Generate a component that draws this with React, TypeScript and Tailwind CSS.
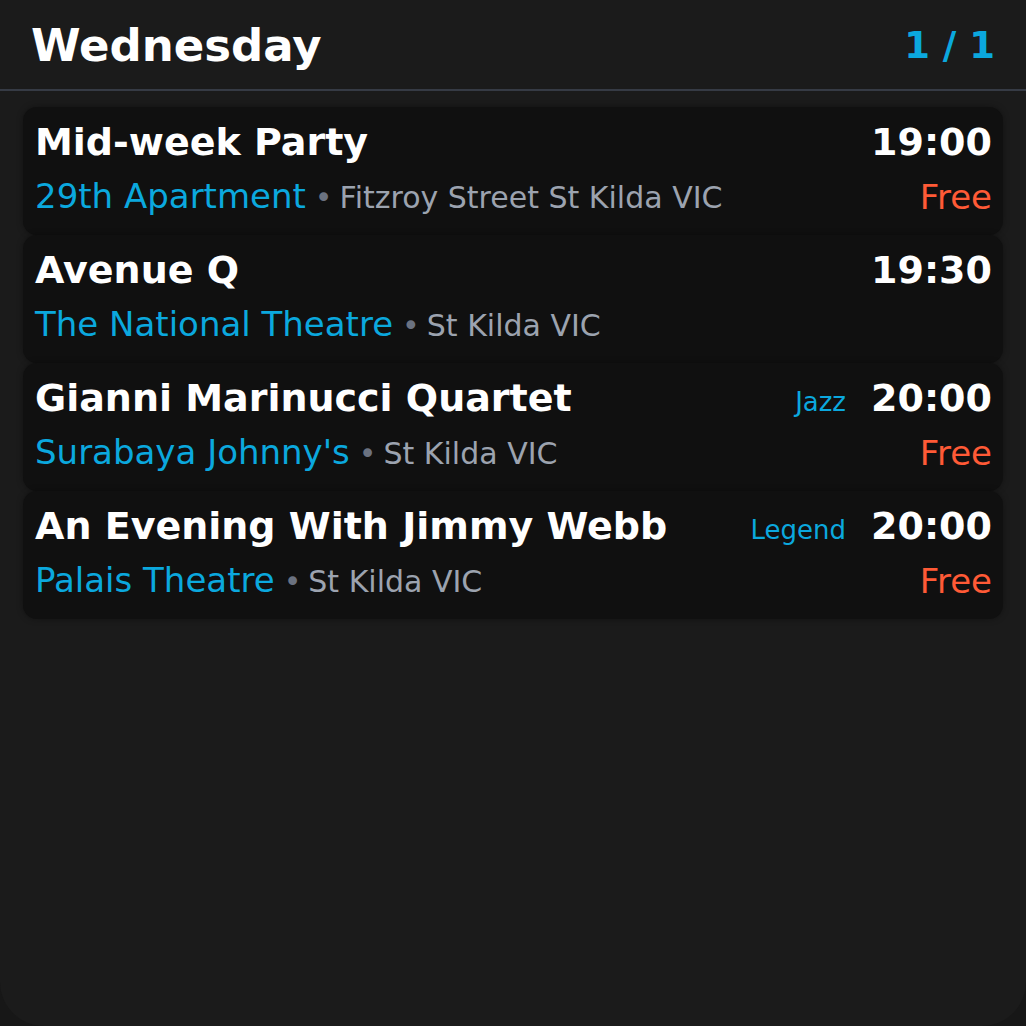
import React from "react";

type Gig = {
  title: string;
  venue: string;
  address: string;
  time: string;
  tag?: string;
  price?: string;
};

const gigs: Gig[] = [
  { title: "Mid-week Party", venue: "29th Apartment", address: "Fitzroy Street St Kilda VIC", time: "19:00", price: "Free" },
  { title: "Avenue Q", venue: "The National Theatre", address: "St Kilda VIC", time: "19:30" },
  { title: "Gianni Marinucci Quartet", venue: "Surabaya Johnny's", address: "St Kilda VIC", time: "20:00", tag: "Jazz", price: "Free" },
  { title: "An Evening With Jimmy Webb", venue: "Palais Theatre", address: "St Kilda VIC", time: "20:00", tag: "Legend", price: "Free" },
];

const GigCard: React.FC<{ gig: Gig }> = ({ gig }) => (
  <div className="bg-[#101010] rounded-[14px] h-[128px] px-3 pt-[16px] shadow-[0_0_6px_rgba(0,0,0,0.35)]">
    {/* Title + time */}
    <div className="flex items-baseline justify-between h-[38px] leading-[38px]">
      <span className="text-[38px] font-bold text-white">{gig.title}</span>
      <div className="flex items-baseline">
        {gig.tag && <span className="text-[26px] text-[#0ba8de] mr-[24px]">{gig.tag}</span>}
        <span className="text-[38px] font-bold text-white translate-x-[1px]">{gig.time}</span>
      </div>
    </div>
    {/* Venue + price */}
    <div className="flex items-baseline justify-between h-[34px] leading-[34px] mt-[18px]">
      <div className="flex items-baseline whitespace-nowrap">
        <span className="text-[34px] text-[#0ba8de]">{gig.venue}</span>
        <span className="text-[30px] text-[#6b7280] ml-[9px] mr-[7px]">•</span>
        <span className="text-[30px] text-[#9ca3af]">{gig.address}</span>
      </div>
      {gig.price && <span className="text-[34px] text-[#ff5a36] translate-y-[1px] translate-x-[1px]">{gig.price}</span>}
    </div>
  </div>
);

export default function App() {
  return (
    <div className="w-full h-[1026px] bg-[#171717]" style={{ fontFamily: "'DejaVu Sans', sans-serif" }}>
      <div className="h-full bg-[#1b1b1b] rounded-b-[44px] overflow-hidden">
        <div className="h-[91px] flex items-center justify-between px-[31px] pt-[2px] border-b-2 border-[#363b45]">
          <span className="text-[45px] font-bold text-white leading-none">Wednesday</span>
          <span className="text-[37px] font-bold text-[#0ba8de] leading-none">1 / 1</span>
        </div>
        <div className="flex flex-col px-[23px] pt-[16px]">
          {gigs.map((g, i) => (
            <GigCard key={i} gig={g} />
          ))}
        </div>
      </div>
    </div>
  );
}
